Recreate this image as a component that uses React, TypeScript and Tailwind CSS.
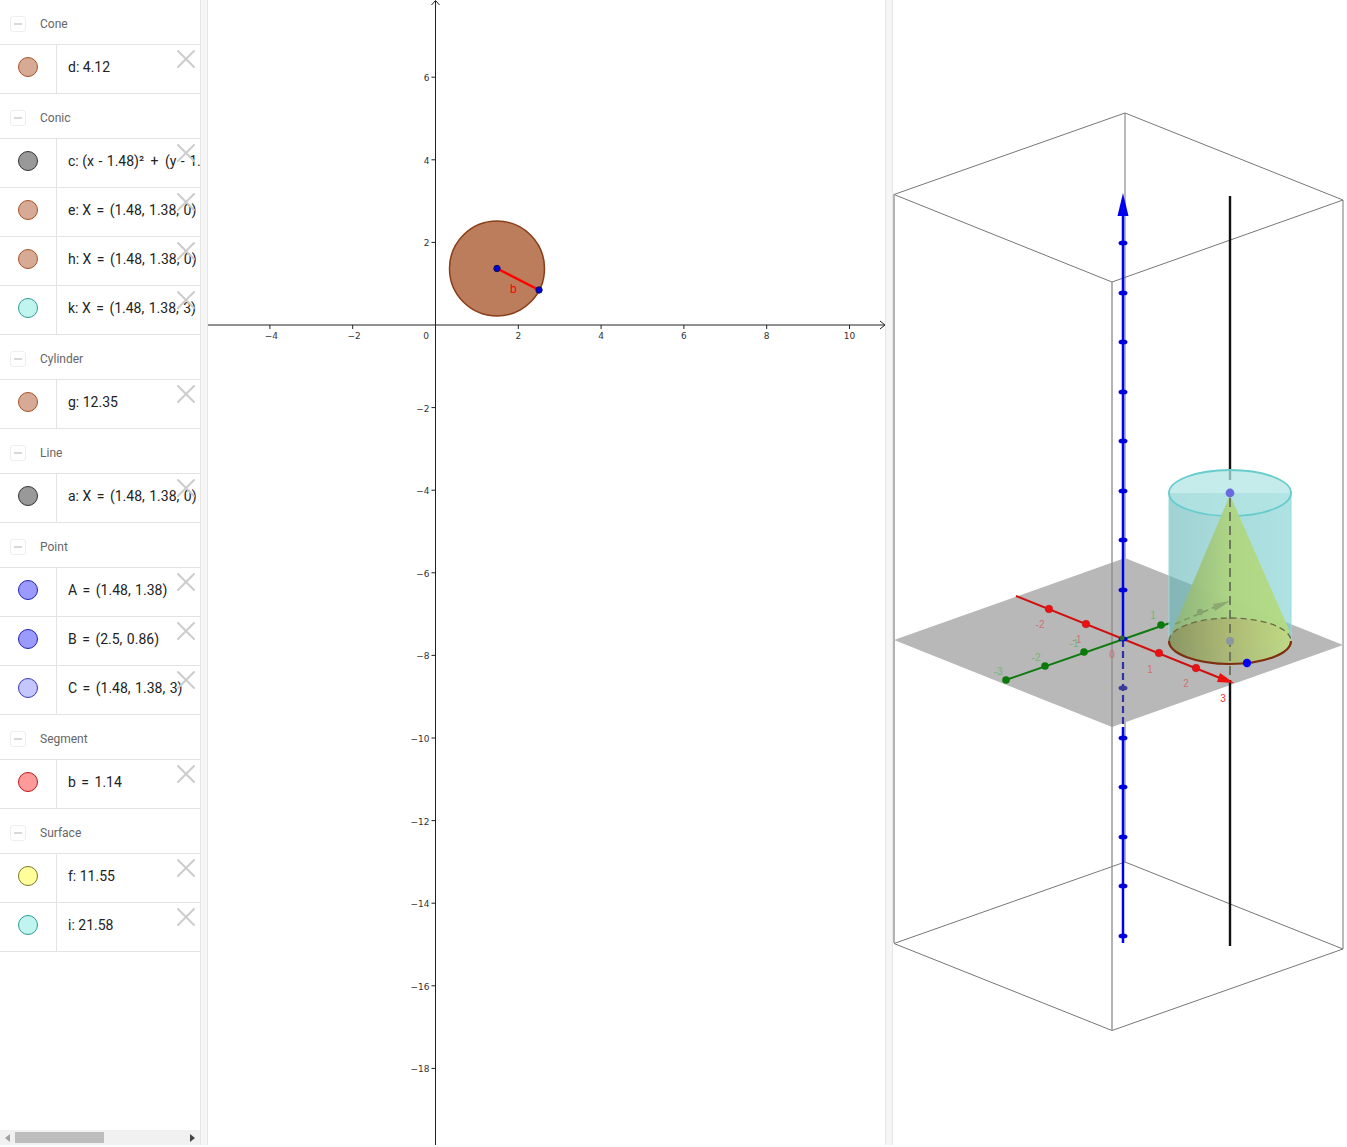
import { X } from 'lucide-react'

const brown = 'bg-[#d6aa94] border-[#a8522a]'
const gray = 'bg-[#999999] border-[#333333]'
const teal = 'bg-[#bff5ee] border-[#2e9a96]'
const blue = 'bg-[#9a9aff] border-[#2323b0]'
const paleBlue = 'bg-[#c6c6ff] border-[#3a3ab4]'
const red = 'bg-[#ff9a9a] border-[#b81818]'
const yellow = 'bg-[#ffff99] border-[#77772a]'

const groups = [
  { name: 'Cone', rows: [{ text: 'd: 4.12', color: brown }] },
  {
    name: 'Conic',
    rows: [
      { text: 'c: (x - 1.48)² + (y - 1.38)² = 1.3', color: gray },
      { text: 'e: X = (1.48, 1.38, 0)', color: brown },
      { text: 'h: X = (1.48, 1.38, 0)', color: brown },
      { text: 'k: X = (1.48, 1.38, 3)', color: teal },
    ],
  },
  { name: 'Cylinder', rows: [{ text: 'g: 12.35', color: brown }] },
  { name: 'Line', rows: [{ text: 'a: X = (1.48, 1.38, 0)', color: gray }] },
  {
    name: 'Point',
    rows: [
      { text: 'A = (1.48, 1.38)', color: blue },
      { text: 'B = (2.5, 0.86)', color: blue },
      { text: 'C = (1.48, 1.38, 3)', color: paleBlue },
    ],
  },
  { name: 'Segment', rows: [{ text: 'b = 1.14', color: red }] },
  {
    name: 'Surface',
    rows: [
      { text: 'f: 11.55', color: yellow },
      { text: 'i: 21.58', color: teal },
    ],
  },
]

// operators get a bit more room than plain spaces, like the formula renderer
function MathText({ text }: { text: string }) {
  return (
    <>
      {text.split(/( = | \+ | - |, )/).map((part, i) =>
        part === ', ' ? (
          <span key={i} className="mr-[1px]">{part}</span>
        ) : part === ' = ' ? (
          <span key={i} className="mx-[2px]">{part}</span>
        ) : part === ' + ' ? (
          <span key={i} className="mx-[3px]">{part}</span>
        ) : part === ' - ' ? (
          <span key={i} className="mx-[1px]">{part}</span>
        ) : (
          <span key={i}>{part}</span>
        ),
      )}
    </>
  )
}

function AlgebraPanel() {
  return (
    <div className="flex w-[200px] shrink-0 flex-col">
      <div className="flex-1 overflow-hidden">
        {groups.map((group) => (
          <div key={group.name}>
            <div className="flex h-[45px] items-center border-b border-[#e3e3e3] pl-[10px] pt-[3px]">
              <div className="flex h-[16px] w-[16px] items-center justify-center rounded-[3px] border border-[#eeeeee]">
                <div className="h-[2px] w-[8px] bg-[#d8d8d8]" />
              </div>
              <span className="ml-[14px] text-[12px] text-[#666666]">{group.name}</span>
            </div>
            {group.rows.map((row) => (
              <div key={row.text} className="relative flex h-[49px] border-b border-[#e3e3e3]">
                <div className="flex w-[57px] shrink-0 items-center justify-center border-r border-[#e3e3e3] pb-[4px]">
                  <div className={`h-[20px] w-[20px] rounded-full border ${row.color}`} />
                </div>
                <div className="flex items-center overflow-hidden whitespace-pre pb-[4px] pl-[11px] text-[14px] text-[#222222]">
                  <MathText text={row.text} />
                </div>
                <X className="absolute left-[170px] top-[-2px] h-[32px] w-[32px] text-[#cccccc]" strokeWidth={1.5} />
              </div>
            ))}
          </div>
        ))}
      </div>
      <div className="flex h-[15px] items-center bg-[#f1f1f1]">
        <div className="ml-[5px] h-0 w-0 border-y-[4px] border-r-[5px] border-y-transparent border-r-[#a3a3a3]" />
        <div className="ml-[5px] h-[11px] w-[89px] bg-[#bdbdbd]" />
        <div className="ml-auto mr-[5px] h-0 w-0 border-y-[4px] border-l-[5px] border-y-transparent border-l-[#444444]" />
      </div>
    </div>
  )
}

const xTicks = [-4, -2, 2, 4, 6, 8, 10]
const yTicks = [6, 4, 2, -2, -4, -6, -8, -10, -12, -14, -16, -18]
const ox = 435.5
const oy = 325
const unitX = 41.4
const unitY = 41.3

function GraphView() {
  return (
    <svg className="w-[677px] shrink-0" viewBox="208 0 677 1145" height="1145">
      <circle cx="497" cy="268.5" r="47.5" fill="#bc7d5c" stroke="#8a3d18" strokeWidth="1.5" />
      <line x1="497" y1="268.5" x2="539" y2="290" stroke="#ff0000" strokeWidth="2.5" />
      <circle cx="497" cy="268.5" r="3.2" fill="#0000e0" stroke="#10104a" />
      <circle cx="539" cy="290" r="3.2" fill="#0000e0" stroke="#10104a" />
      <text x="510" y="293" fontSize="12" fill="#ff0000" fontFamily="'Liberation Sans', sans-serif">b</text>
      <line x1="208" y1={oy} x2="884" y2={oy} stroke="#222" />
      <line x1={ox} y1="1" x2={ox} y2="1145" stroke="#222" />
      <path d="M880 321 L885 325 L880 329 M431.5 5 L435.5 0.5 L439.5 5" fill="none" stroke="#222" />
      {xTicks.map((t) => (
        <g key={t}>
          <line x1={ox + t * unitX} y1={oy} x2={ox + t * unitX} y2={oy + 4} stroke="#222" />
          <text x={ox + t * unitX + (t < 0 ? 1.5 : 0)} y={339} textAnchor="middle" fontSize="9" fill="#333" fontFamily="'DejaVu Sans', sans-serif">
            {t < 0 ? `−${-t}` : t}
          </text>
        </g>
      ))}
      {yTicks.map((t) => (
        <g key={t}>
          <line x1={ox - 4} y1={oy - t * unitY} x2={ox} y2={oy - t * unitY} stroke="#222" />
          <text x={429.5} y={oy - t * unitY + 4} textAnchor="end" fontSize="9" fill="#333" fontFamily="'DejaVu Sans', sans-serif">
            {t < 0 ? `−${-t}` : t}
          </text>
        </g>
      ))}
      <text x="429" y="339" textAnchor="end" fontSize="9" fill="#333" fontFamily="'DejaVu Sans', sans-serif">0</text>
    </svg>
  )
}

const zTicks = [243, 293, 342, 392, 441, 491, 540, 590, 639, 738, 787, 837, 886, 936]
const redTicks: [number, number][] = [[1049, 609], [1086, 624], [1159, 653], [1196, 668]]
const greenTicks: [number, number][] = [[1006, 680], [1045, 666], [1084, 652], [1161, 625]]
const redLabels: [string, number, number][] = [['-2', 1040, 628], ['-1', 1077, 643], ['0', 1112, 658], ['1', 1150, 673], ['2', 1186, 687], ['3', 1223, 702]]
const greenLabels: [string, number, number][] = [['1', 1153, 619], ['-1', 1074, 647], ['-2', 1036, 661], ['-3', 998, 675]]

function View3D() {
  return (
    <svg className="min-w-0 flex-1" viewBox="893 0 454 1145" height="1145">
      <defs>
        <linearGradient id="coneBase" x1="0" x2="1" y1="0" y2="0">
          <stop offset="0" stopColor="#8a9560" />
          <stop offset="0.5" stopColor="#adb974" />
          <stop offset="1" stopColor="#c0da84" />
        </linearGradient>
        <linearGradient id="coneBody" x1="0" x2="1" y1="0" y2="0">
          <stop offset="0" stopColor="#8fb37a" />
          <stop offset="0.5" stopColor="#aed581" />
          <stop offset="1" stopColor="#b4dc82" />
        </linearGradient>
        <linearGradient id="cylBody" x1="0" x2="1" y1="0" y2="0">
          <stop offset="0" stopColor="#62b4b6" />
          <stop offset="0.6" stopColor="#71c6c6" />
          <stop offset="1" stopColor="#78d0d0" />
        </linearGradient>
      </defs>

      <g fill="none" stroke="#777" strokeWidth="1">
        <path d="M894 194.5 L1125 113 L1343 200 L1112 282 Z" />
        <path d="M894 943.5 L1125 862 L1343 949 L1112 1030.5 Z" />
        <path d="M1125 113 V862 M1343 200 V949" />
      </g>
      <line x1="894" y1="194" x2="894" y2="943" stroke="#9a9a9a" strokeWidth="1.5" />

      <polygon points="894,640 1125,558 1343,645 1112,727" fill="#b8b8b8" />
      <line x1="1112" y1="282" x2="1112" y2="1030" stroke="#8a8a8a" strokeWidth="1.3" />

      <line x1="1230" y1="196" x2="1230" y2="480" stroke="#111" strokeWidth="2.4" />
      <line x1="1230" y1="680" x2="1230" y2="946" stroke="#111" strokeWidth="2.4" />

      {/* axes */}
      <line x1="1016" y1="596" x2="1220" y2="678" stroke="#d01010" strokeWidth="2" />
      <line x1="1003" y1="681" x2="1170" y2="623" stroke="#0f7a0f" strokeWidth="2" />
      {redTicks.map(([x, y]) => (
        <circle key={x} cx={x} cy={y} r="3.8" fill="#ee1010" stroke="#b02020" strokeWidth="0.6" />
      ))}
      {greenTicks.map(([x, y]) => (
        <circle key={x} cx={x} cy={y} r="3.8" fill="#0a7a0a" />
      ))}
      <polygon points="1234,683 1217,682 1220,673" fill="#ee0f0f" />
      {redLabels.map(([t, x, y]) => (
        <text key={t} x={x} y={y} textAnchor="middle" fontSize="10" fill={t === '3' ? '#ee3333' : '#d07070'} fontFamily="'Liberation Sans', sans-serif">{t}</text>
      ))}
      {greenLabels.map(([t, x, y]) => (
        <text key={t} x={x} y={y} textAnchor="middle" fontSize="10" fill="#70b870" fontFamily="'Liberation Sans', sans-serif">{t}</text>
      ))}

      {/* z axis */}
      <line x1="1123" y1="210" x2="1123" y2="640" stroke="#0000ee" strokeWidth="2.5" />
      <line x1="1123" y1="640" x2="1123" y2="727" stroke="#3030a8" strokeWidth="2.2" strokeDasharray="7 4" />
      <line x1="1123" y1="727" x2="1123" y2="943" stroke="#0000ee" strokeWidth="2.5" />
      <polygon points="1123,193 1128.5,216 1117.5,216" fill="#0000ee" />
      {zTicks.map((y) => (
        <ellipse key={y} cx="1123" cy={y} rx="4.5" ry="2.5" fill="#0000e0" />
      ))}
      <ellipse cx="1123" cy="688" rx="4.5" ry="2.5" fill="#3a3a9a" />
      <circle cx="1122" cy="638" r="2.6" fill="#2a6a30" />

      {/* cylinder + cone */}
      <path d="M1169 493 V641 A61 23 0 0 0 1291 641 V493 Z" fill="url(#cylBody)" fillOpacity="0.6" />
      <path d="M1169 493 V641 M1291 493 V641" stroke="#9adada" strokeWidth="1" />
      <ellipse cx="1230" cy="493" rx="61" ry="23" fill="#b3e4e4" fillOpacity="0.75" stroke="#66cccc" strokeWidth="1.8" />
      <path d="M1230 495 L1172 632 A61 23 0 0 0 1290 632 Z" fill="url(#coneBody)" fillOpacity="0.95" />
      <ellipse cx="1230" cy="641" rx="61" ry="23" fill="url(#coneBase)" fillOpacity="0.95" />
      <path d="M1169 641 A61 23 0 0 1 1291 641" fill="none" stroke="#6b6b45" strokeWidth="1.3" strokeDasharray="6 4" />
      <path d="M1169 641 A61 23 0 0 0 1291 641" fill="none" stroke="#7e2f10" strokeWidth="2.2" />
      <line x1="1175" y1="624" x2="1215" y2="607" stroke="#7f9a63" strokeWidth="1.6" strokeDasharray="6 4" />
      <polygon points="1230,601 1213,604 1215,611" fill="#8aa870" />
      <circle cx="1200" cy="612" r="3.2" fill="#86a46e" />
      <line x1="1230" y1="498" x2="1230" y2="680" stroke="#66705a" strokeWidth="1.8" strokeDasharray="9 5" />
      <circle cx="1230" cy="641" r="4" fill="#8a98a0" />
      <circle cx="1247" cy="663" r="4.2" fill="#0000ee" />
      <circle cx="1230" cy="493" r="4.4" fill="#6a6ae0" />
    </svg>
  )
}

export default function App() {
  return (
    <div className="h-[1147px] w-[1347px] overflow-hidden bg-white font-['Roboto','Liberation_Sans',sans-serif]">
      <div className="flex h-[1145px]">
        <AlgebraPanel />
        <div className="w-[8px] shrink-0 border-x border-[#e6e6e6] bg-[#f6f6f6]" />
        <GraphView />
        <div className="w-[8px] shrink-0 border-x border-[#e6e6e6] bg-[#f6f6f6]" />
        <View3D />
      </div>
    </div>
  )
}
